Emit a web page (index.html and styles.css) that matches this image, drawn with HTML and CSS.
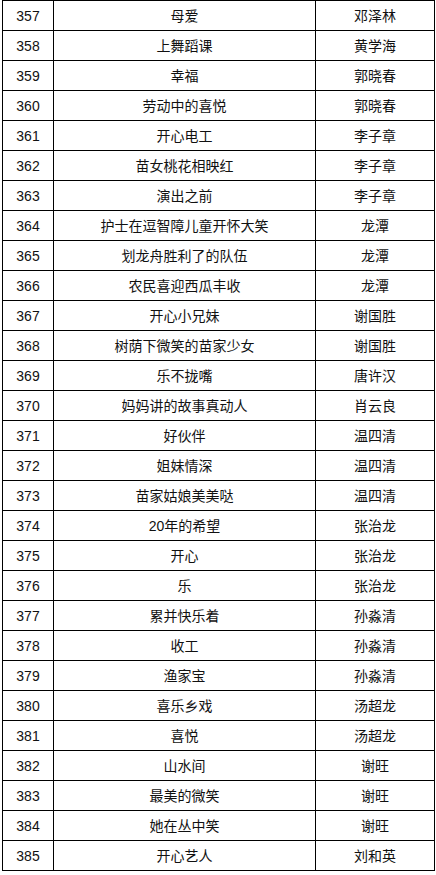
FILE: index.html
```html
<!DOCTYPE html>
<html lang="zh">
<head>
<meta charset="utf-8">
<link rel="stylesheet" href="styles.css">
</head>
<body>
<table class="list">
<colgroup><col class="c-num"><col class="c-title"><col class="c-name"></colgroup>
<tbody>
<tr><td>357</td><td>母爱</td><td>邓泽林</td></tr>
<tr><td>358</td><td>上舞蹈课</td><td>黄学海</td></tr>
<tr><td>359</td><td>幸福</td><td>郭晓春</td></tr>
<tr><td>360</td><td>劳动中的喜悦</td><td>郭晓春</td></tr>
<tr><td>361</td><td>开心电工</td><td>李子章</td></tr>
<tr><td>362</td><td>苗女桃花相映红</td><td>李子章</td></tr>
<tr><td>363</td><td>演出之前</td><td>李子章</td></tr>
<tr><td>364</td><td>护士在逗智障儿童开怀大笑</td><td>龙潭</td></tr>
<tr><td>365</td><td>划龙舟胜利了的队伍</td><td>龙潭</td></tr>
<tr><td>366</td><td>农民喜迎西瓜丰收</td><td>龙潭</td></tr>
<tr><td>367</td><td>开心小兄妹</td><td>谢国胜</td></tr>
<tr><td>368</td><td>树荫下微笑的苗家少女</td><td>谢国胜</td></tr>
<tr><td>369</td><td>乐不拢嘴</td><td>唐许汉</td></tr>
<tr><td>370</td><td>妈妈讲的故事真动人</td><td>肖云良</td></tr>
<tr><td>371</td><td>好伙伴</td><td>温四清</td></tr>
<tr><td>372</td><td>姐妹情深</td><td>温四清</td></tr>
<tr><td>373</td><td>苗家姑娘美美哒</td><td>温四清</td></tr>
<tr><td>374</td><td>20年的希望</td><td>张治龙</td></tr>
<tr><td>375</td><td>开心</td><td>张治龙</td></tr>
<tr><td>376</td><td>乐</td><td>张治龙</td></tr>
<tr><td>377</td><td>累并快乐着</td><td>孙淼清</td></tr>
<tr><td>378</td><td>收工</td><td>孙淼清</td></tr>
<tr><td>379</td><td>渔家宝</td><td>孙淼清</td></tr>
<tr><td>380</td><td>喜乐乡戏</td><td>汤超龙</td></tr>
<tr><td>381</td><td>喜悦</td><td>汤超龙</td></tr>
<tr><td>382</td><td>山水间</td><td>谢旺</td></tr>
<tr><td>383</td><td>最美的微笑</td><td>谢旺</td></tr>
<tr><td>384</td><td>她在丛中笑</td><td>谢旺</td></tr>
<tr><td>385</td><td>开心艺人</td><td>刘和英</td></tr>
</tbody>
</table>
</body>
</html>
```
FILE: styles.css
```css
html, body {
  margin: 0;
  padding: 0;
  background: #fff;
}
body {
  padding-left: 2px;
  font-family: "Liberation Sans", "Noto Sans CJK SC", sans-serif;
  font-size: 14px;
  color: #111;
}
.list {
  border-collapse: collapse;
  table-layout: fixed;
  width: 432px;
}
.c-num { width: 51px; }
.c-title { width: 262px; }
.c-name { width: 119px; }
.list td {
  border: 1px solid #000;
  height: 29px;
  padding: 0;
  text-align: center;
  vertical-align: middle;
  line-height: 16px;
}
```
